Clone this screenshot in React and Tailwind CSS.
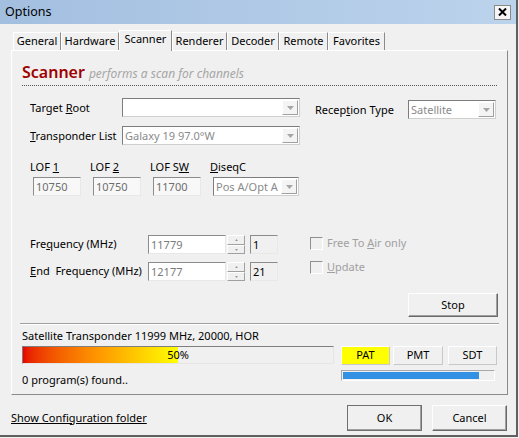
import React from 'react';

const tabs = [
  { label: 'General', w: 'w-[48px]' },
  { label: 'Hardware', w: 'w-[58px]' },
  { label: 'Scanner', w: 'w-[53px]', active: true },
  { label: 'Renderer', w: 'w-[55px]' },
  { label: 'Decoder', w: 'w-[52px]' },
  { label: 'Remote', w: 'w-[49px]' },
  { label: 'Favorites', w: 'w-[57px]' },
];

const Arrow = ({ up }) => (
  <svg width="7" height="4" viewBox="0 0 7 4">
    <polygon points={up ? '3.5,0 7,4 0,4' : '0,0 7,0 3.5,4'} fill="#a6a6a6" />
  </svg>
);

const Combo = ({ value, className = '' }) => (
  <div className={`flex h-[19px] border border-t-[#7d7d7d] border-l-[#7d7d7d] border-b-[#cfcfcf] border-r-[#cfcfcf] bg-white ${className}`}>
    <div className="flex-1 pl-[2px] leading-[17px] text-[#8a8a8a] truncate">{value}</div>
    <div className="w-[16px] my-[1px] mr-[1px] flex items-center justify-center bg-[#f4f4f4] border border-t-white border-l-white border-b-[#a0a0a0] border-r-[#a0a0a0]">
      <Arrow />
    </div>
  </div>
);

const Field = ({ value, className = '' }) => (
  <div className={`h-[19px] border border-t-[#8c8c8c] border-l-[#8c8c8c] border-b-[#e8e8e8] border-r-[#e8e8e8] pl-[2px] leading-[17px] ${className}`}>
    {value}
  </div>
);

const Spin = () => (
  <div className="flex flex-col w-[18px] h-[19px] ml-[1px]">
    <div className="h-[10px] flex items-center justify-center bg-[#f0f0f0] border border-t-white border-l-white border-b-[#a0a0a0] border-r-[#a0a0a0]">
      <svg width="3" height="2" viewBox="0 0 3 2"><polygon points="1.5,0 3,2 0,2" fill="#9a9a9a" /></svg>
    </div>
    <div className="h-[9px] flex items-center justify-center bg-[#f0f0f0] border border-t-white border-l-white border-b-[#a0a0a0] border-r-[#a0a0a0]">
      <svg width="3" height="2" viewBox="0 0 3 2"><polygon points="0,0 3,0 1.5,2" fill="#9a9a9a" /></svg>
    </div>
  </div>
);

const Button = ({ children, className = '' }) => (
  <div className={`flex items-center justify-center border border-t-[#fdfdfd] border-l-[#fdfdfd] border-b-[#696969] border-r-[#696969] shadow-[inset_-1px_-1px_0_#a0a0a0] ${className}`}>
    {children}
  </div>
);

const Check = ({ children }) => (
  <div className="flex items-center h-[16px] text-[#a0a0a0]">
    <div className="w-[13px] h-[13px] border border-t-[#8f8f8f] border-l-[#8f8f8f] border-b-white border-r-white bg-[#f0f0f0]" />
    <span className="ml-[4px]">{children}</span>
  </div>
);

export default function App() {
  return (
    <div className="w-[519px] h-[438px] bg-[#f0f0f0]">
      <div className="w-[518px] h-[437px] flex flex-col bg-[#f0f0f0] border-r-2 border-b-2 border-r-[#5f5f5f] border-b-[#5f5f5f] font-['Noto_Sans',sans-serif] text-[11px] text-black">
        {/* title bar */}
        <div className="h-[24px] flex items-center justify-between pl-[5px] pr-[5px] bg-linear-to-r from-[#a3bfe0] to-[#bcd3ec]">
          <span className="text-[12.5px]">Options</span>
          <div className="w-[17px] h-[15px] flex items-center justify-center bg-[#f6f6f6] border border-[#8a8a8a]">
            <svg width="9" height="8" viewBox="0 0 9 8">
              <path d="M1 0.5 L8 7.5 M8 0.5 L1 7.5" stroke="#000" strokeWidth="2" />
            </svg>
          </div>
        </div>

        {/* tabs */}
        <div className="flex items-end h-[26px] pl-[13px]">
          {tabs.map(t => (
            <div
              key={t.label}
              className={`${t.w} flex items-center justify-center border-t border-l border-r border-t-white border-l-white border-r-[#8a8a8a] ${
                t.active ? 'h-[21px] -mb-px relative z-10 bg-[#f0f0f0] pb-[3px]' : 'h-[18px]'
              }`}
            >
              {t.label}
            </div>
          ))}
        </div>

        {/* panel */}
        <div className="ml-[11px] w-[497px] h-[345px] border border-t-white border-l-white border-b-[#8a8a8a] border-r-[#8a8a8a] px-[10px] flex flex-col">
          <div className="mt-[11px] h-[24px] flex items-baseline border-b border-dotted border-b-[#555]">
            <span className="text-[16px] leading-[20px] font-semibold text-[#a00000]">Scanner</span>
            <span className="ml-[4px] italic text-[12px] text-[#a6a6a6]">performs a scan for channels</span>
          </div>

          <div className="mt-[12px] h-[19px] flex items-start pl-[8px]">
            <div className="w-[92px] leading-[19px]">Target <span className="underline">R</span>oot</div>
            <Combo className="w-[178px]" value="" />
            <div className="mt-[2px] ml-[15px] w-[93px] leading-[19px]">Recep<span className="underline">t</span>ion Type</div>
            <Combo className="mt-[2px] w-[88px]" value="Satellite" />
          </div>

          <div className="mt-[9px] h-[19px] flex items-start pl-[8px]">
            <div className="w-[92px] leading-[19px]"><span className="underline">T</span>ransponder List</div>
            <Combo className="w-[178px]" value="Galaxy 19 97.0°W" />
          </div>

          <div className="mt-[15px] flex pl-[8px]">
            {[
              ['LOF ', '1', '', '10750'],
              ['LOF ', '2', '', '10750'],
              ['LOF S', 'W', '', '11700'],
            ].map(([a, u, b, v]) => (
              <div key={a + u} className="w-[60px] flex flex-col">
                <div className="leading-[14px]">{a}<span className="underline">{u}</span>{b}</div>
                <Field className="mt-[3px] ml-[3px] w-[48px] bg-[#f8f8f8] text-[#6d6d6d]" value={v} />
              </div>
            ))}
            <div className="flex flex-col">
              <div className="leading-[14px]"><span className="underline">D</span>iseqC</div>
              <Combo className="mt-[3px] ml-[3px] w-[86px]" value="Pos A/Opt A" />
            </div>
          </div>

          <div className="mt-[39px] flex pl-[8px]">
            <div className="flex flex-col w-[280px]">
              <div className="flex items-center h-[19px]">
                <div className="w-[118px]">Fre<span className="underline">q</span>uency (MHz)</div>
                <Field className="w-[78px] bg-white text-[#7a7a7a]" value="11779" />
                <Spin />
                <Field className="ml-[5px] w-[28px] bg-[#f0f0f0] border-t-[#6e6e6e] border-l-[#6e6e6e]" value="1" />
              </div>
              <div className="mt-[8px] flex items-center h-[19px]">
                <div className="w-[118px]"><span className="underline">E</span>nd&nbsp; Frequency (MHz)</div>
                <Field className="w-[78px] bg-white text-[#7a7a7a]" value="12177" />
                <Spin />
                <Field className="ml-[5px] w-[28px] bg-[#f0f0f0] border-t-[#6e6e6e] border-l-[#6e6e6e]" value="21" />
              </div>
            </div>
            <div className="flex flex-col">
              <Check>Free To <span className="underline">A</span>ir only</Check>
              <div className="mt-[8px]">
                <Check><span className="underline">U</span>pdate</Check>
              </div>
            </div>
          </div>

          <div className="mt-[12px] flex justify-end -mr-[1px]">
            <Button className="w-[90px] h-[24px]">Stop</Button>
          </div>

          <div className="mt-[6px] -mx-[2px] border-t border-b border-t-[#a0a0a0] border-b-white" />

          <div className="mt-[4px] leading-[14px]">Satellite Transponder 11999 MHz, 20000, HOR</div>

          <div className="mt-[3px] flex">
            <div className="w-[322px] flex flex-col">
              <div className="relative w-[312px] h-[18px] border border-t-[#7f7f7f] border-l-[#7f7f7f] border-b-[#e5e5e5] border-r-[#e5e5e5] bg-[#f0f0f0]">
                <div className="w-[155px] h-full bg-linear-to-r from-[#e60000] via-[#ff9a00] to-[#ffff00]" />
                <div className="absolute inset-0 flex items-center justify-center leading-[16px]">50%</div>
              </div>
              <div className="mt-[9px] leading-[14px]">0 program(s) found..</div>
            </div>
            <div className="flex flex-col">
              <div className="flex gap-[3px]">
                <div className="w-[49px] h-[19px] flex items-center justify-center bg-[#ffff00] border border-t-white border-l-white border-b-[#c8c8c8] border-r-[#c8c8c8]">PAT</div>
                <div className="w-[50px] h-[19px] flex items-center justify-center border border-t-white border-l-white border-b-[#c8c8c8] border-r-[#c8c8c8]">PMT</div>
                <div className="ml-[2px] w-[49px] h-[19px] flex items-center justify-center border border-t-white border-l-white border-b-[#c8c8c8] border-r-[#c8c8c8]">SDT</div>
              </div>
              <div className="mt-[5px] w-[154px] h-[11px] border border-t-[#a8a8a8] border-l-[#a8a8a8] border-b-white border-r-white p-[1px]">
                <div className="w-[136px] h-full bg-[#3391e4]" />
              </div>
            </div>
          </div>
        </div>

        {/* footer */}
        <div className="mt-[10px] h-[26px] flex items-center pl-[11px] pr-[9px]">
          <span className="underline">Show Configuration folder</span>
          <div className="ml-auto flex gap-[10px]">
            <Button className="w-[75px] h-[26px] outline outline-[#707070] -outline-offset-1">OK</Button>
            <Button className="w-[75px] h-[26px]">Cancel</Button>
          </div>
        </div>
      </div>
    </div>
  );
}
